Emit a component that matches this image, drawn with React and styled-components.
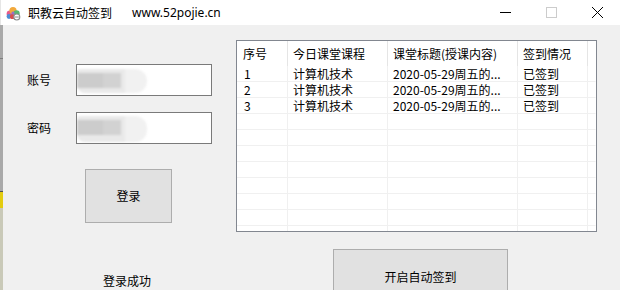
import React from "react";
import styled, { createGlobalStyle } from "styled-components";

const GlobalStyle = createGlobalStyle`
  body {
    margin: 0;
    background: #f0f0f0;
    font-family: "Noto Sans CJK SC", "Noto Sans", sans-serif;
    font-size: 12px;
    color: #000;
  }
`;

const Window = styled.div`
  width: 620px;
  height: 290px;
  display: flex;
  flex-direction: column;
  overflow: hidden;
  background: #f0f0f0;
`;

const TitleBar = styled.div`
  height: 25px;
  flex: none;
  display: flex;
  align-items: center;
  background: #fff;
  border-left: 1px solid #e6e6e6;
`;

const AppIcon = styled.svg`
  width: 16px;
  height: 16px;
  margin-left: 4px;
  margin-right: 7px;
`;

const Title = styled.span`
  font-size: 12px;
  line-height: 16px;
`;

const Site = styled.span`
  margin-left: 20px;
  font-family: "Noto Sans", sans-serif;
  font-size: 12px;
  line-height: 16px;
`;

const Controls = styled.div`
  margin-left: auto;
  display: flex;
  height: 100%;
`;

const Ctrl = styled.div`
  width: 46px;
  height: 100%;
  display: flex;
  align-items: center;
  justify-content: center;
`;

const Body = styled.div`
  flex: 1;
  display: flex;
`;

const Edge = styled.div`
  width: 3px;
  flex: none;
  background: linear-gradient(
    to bottom,
    #a9a9a9 0 33px,
    #7e7e7e 33px 34px,
    #a9a9a9 34px 166px,
    #505050 166px 167px,
    #e3cc10 167px 183px,
    #c9c9b8 183px 100%
  );
`;

const LeftPanel = styled.div`
  width: 209px;
  flex: none;
  padding: 39px 0 0 24px;
  display: flex;
  flex-direction: column;
`;

const Fields = styled.div`
  display: flex;
  flex-direction: column;
  gap: 16px;
`;

const Field = styled.div`
  display: flex;
  align-items: center;
`;

const Label = styled.span`
  width: 49px;
  line-height: 16px;
`;

const TextBox = styled.div`
  width: 134px;
  height: 30px;
  border: 1px solid #7a7a7a;
  background: #fff;
  display: flex;
  align-items: center;
  overflow: hidden;
`;

const Smudge = styled.div`
  width: 70px;
  height: ${(p) => p.$h}px;
  margin-top: ${(p) => p.$dy}px;
  display: flex;
  align-items: center;
  border-radius: 3px 12px 12px 8px;
  background: linear-gradient(to right, #e9e9e9 0 48px, #f1f1f1 48px 100%);
  filter: blur(0.8px);
`;

const SmudgeCore = styled.div`
  width: 44px;
  height: 15px;
  margin-top: ${(p) => p.$dy}px;
  background: linear-gradient(to right, #cccccc 0 26px, #d2d2d2 26px 100%);
`;

const Button = styled.div`
  width: ${(p) => p.$w}px;
  height: ${(p) => p.$h}px;
  margin-left: ${(p) => p.$ml}px;
  margin-top: ${(p) => p.$mt}px;
  flex: none;
  box-sizing: border-box;
  background: #e1e1e1;
  border: 1px solid #adadad;
  display: flex;
  align-items: center;
  justify-content: center;
  line-height: 16px;
`;

const Status = styled.div`
  margin: 50px 0 0 76px;
  line-height: 16px;
`;

const RightPanel = styled.div`
  padding-top: 15px;
  display: flex;
  flex-direction: column;
`;

const List = styled.div`
  width: 359px;
  height: 190px;
  border: 1px solid #828790;
  background: #fff;
  overflow: hidden;
`;

const Row = styled.div`
  display: grid;
  grid-template-columns: 51px 100px 130px 70px 1fr;
`;

const HeadCell = styled.div`
  height: 25px;
  padding-left: ${(p) => p.$pl || 5}px;
  border-right: 1px solid ${(p) => (p.$last ? "transparent" : "#e5e5e5")};
  display: flex;
  align-items: center;
  white-space: nowrap;
`;

const Cell = styled.div`
  height: 15px;
  padding-left: ${(p) => p.$pl || 5}px;
  border-right: 1px solid ${(p) => (p.$last ? "transparent" : "#f0f0f0")};
  border-bottom: 1px solid #f0f0f0;
  line-height: 15px;
  white-space: nowrap;
  overflow: hidden;
`;

const columns = ["序号", "今日课堂课程", "课堂标题(授课内容)", "签到情况"];

const records = [
  ["1", "计算机技术", "2020-05-29周五的...", "已签到"],
  ["2", "计算机技术", "2020-05-29周五的...", "已签到"],
  ["3", "计算机技术", "2020-05-29周五的...", "已签到"],
];

const rows = [...records, ...Array.from({ length: 8 }, () => ["", "", "", ""])];

const Logo = () => (
  <AppIcon viewBox="0 0 16 16">
    <circle cx="5" cy="9" r="3.4" fill="#e85a8c" />
    <circle cx="8" cy="5.5" r="3.6" fill="#f2a93b" />
    <circle cx="11.5" cy="8.5" r="3.2" fill="#56b870" />
    <circle cx="4" cy="11.5" r="2.4" fill="#4b8fd6" />
    <circle cx="7.5" cy="11.5" r="2.6" fill="#d94d4d" />
    <circle cx="8" cy="8" r="1.6" fill="#9b6fc7" />
    <circle cx="11.8" cy="12" r="3" fill="#fff" stroke="#8a8a8a" strokeWidth="1.1" />
    <path d="M9.8 12h4" stroke="#8a8a8a" strokeWidth="1" />
  </AppIcon>
);

export default function App() {
  return (
    <Window>
      <GlobalStyle />
      <TitleBar>
        <Logo />
        <Title>职教云自动签到</Title>
        <Site>www.52pojie.cn</Site>
        <Controls>
          <Ctrl>
            <svg width="11" height="11" viewBox="0 0 11 11">
              <path d="M0 5.5h11" stroke="#000" strokeWidth="1" />
            </svg>
          </Ctrl>
          <Ctrl>
            <svg width="11" height="11" viewBox="0 0 11 11">
              <rect x="0.5" y="0.5" width="10" height="10" fill="none" stroke="#cccccc" />
            </svg>
          </Ctrl>
          <Ctrl>
            <svg width="11" height="11" viewBox="0 0 11 11">
              <path d="M0 0L11 11M11 0L0 11" stroke="#000" strokeWidth="1" />
            </svg>
          </Ctrl>
        </Controls>
      </TitleBar>
      <Body>
        <Edge />
        <LeftPanel>
          <Fields>
            <Field>
              <Label>账号</Label>
              <TextBox>
                <Smudge $h={24} $dy={2}>
                  <SmudgeCore $dy={-2} />
                </Smudge>
              </TextBox>
            </Field>
            <Field>
              <Label>密码</Label>
              <TextBox>
                <Smudge $h={26} $dy={2}>
                  <SmudgeCore $dy={-4} />
                </Smudge>
              </TextBox>
            </Field>
          </Fields>
          <Button $w={87} $h={54} $ml={58} $mt={25}>
            登录
          </Button>
          <Status>登录成功</Status>
        </LeftPanel>
        <RightPanel>
          <List>
            <Row>
              {columns.map((c, i) => (
                <HeadCell key={c} $pl={i === 0 ? 6 : 5}>
                  {c}
                </HeadCell>
              ))}
              <HeadCell $last />
            </Row>
            {rows.map((r, ri) => (
              <Row key={ri}>
                {r.map((v, i) => (
                  <Cell key={i} $pl={i === 0 ? 7 : 5}>
                    {v}
                  </Cell>
                ))}
                <Cell $last />
              </Row>
            ))}
          </List>
          <Button $w={175} $h={56} $ml={97} $mt={17}>
            开启自动签到
          </Button>
        </RightPanel>
      </Body>
    </Window>
  );
}
